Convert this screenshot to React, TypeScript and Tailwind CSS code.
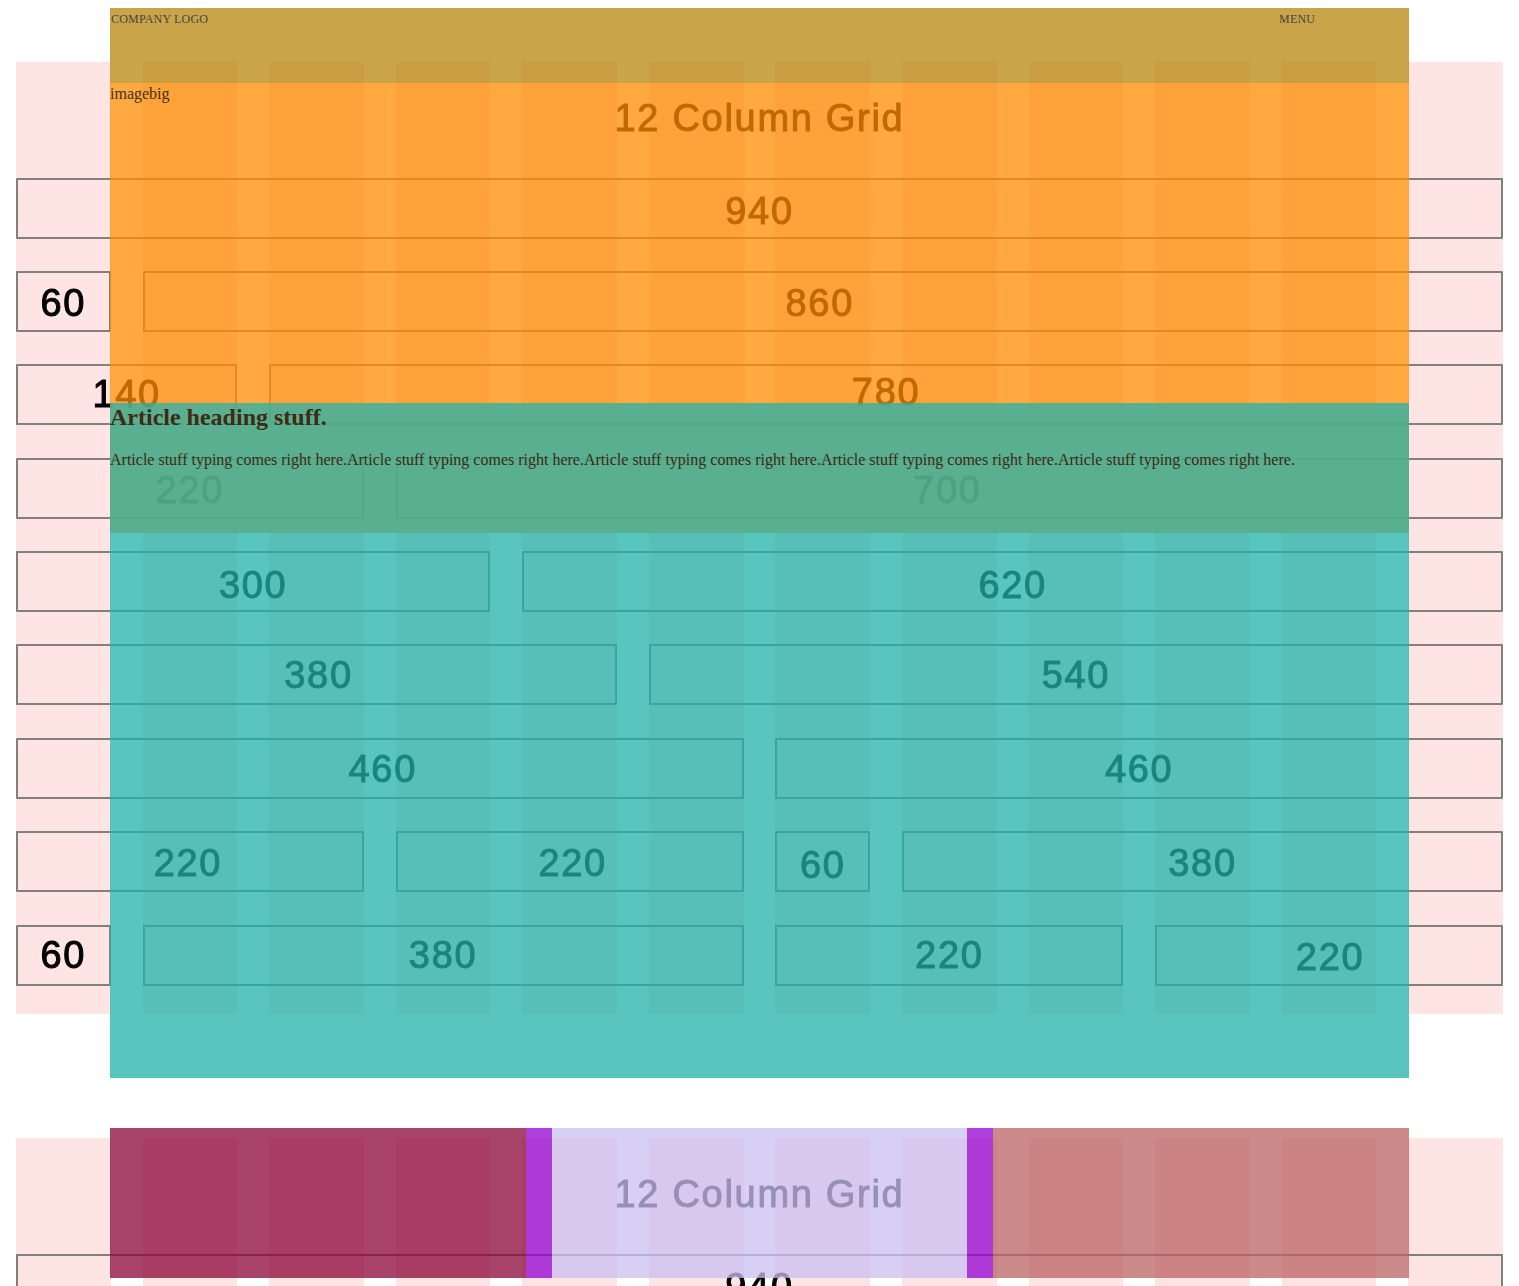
const rows: { span: string; label: string; shift: string }[][] = [
  [{ span: "col-span-12", label: "940", shift: "translate-y-[3px]" }],
  [
    { span: "col-span-1", label: "60", shift: "translate-y-[2px]" },
    { span: "col-span-11", label: "860", shift: "-translate-x-[3px] translate-y-[2px]" },
  ],
  [
    { span: "col-span-2", label: "140", shift: "-translate-y-[1px]" },
    { span: "col-span-10", label: "780", shift: "-translate-y-[3px]" },
  ],
  [
    { span: "col-span-3", label: "220", shift: "translate-y-[2px]" },
    { span: "col-span-9", label: "700", shift: "-translate-x-[2px] translate-y-[2px]" },
  ],
  [
    { span: "col-span-4", label: "300", shift: "translate-y-[3px]" },
    { span: "col-span-8", label: "620", shift: "translate-y-[3px]" },
  ],
  [
    { span: "col-span-5", label: "380", shift: "translate-x-[2px]" },
    { span: "col-span-7", label: "540", shift: "" },
  ],
  [
    { span: "col-span-6", label: "460", shift: "translate-x-[3px] translate-y-[1px]" },
    { span: "col-span-6", label: "460", shift: "translate-y-[1px]" },
  ],
  [
    { span: "col-span-3", label: "220", shift: "-translate-x-[2px] translate-y-[1px]" },
    { span: "col-span-3", label: "220", shift: "translate-x-[3px] translate-y-[1px]" },
    { span: "col-span-1", label: "60", shift: "translate-y-[3px]" },
    { span: "col-span-5", label: "380", shift: "translate-y-[1px]" },
  ],
  [
    { span: "col-span-1", label: "60", shift: "" },
    { span: "col-span-5", label: "380", shift: "" },
    { span: "col-span-3", label: "220", shift: "" },
    { span: "col-span-3", label: "220", shift: "translate-x-[1px] translate-y-[2px]" },
  ],
];

const columns = Array.from({ length: 12 }, (_, i) => i);

function GridSheet({ rowCount }: { rowCount: number }) {
  return (
    <div className="relative h-[1076px] pl-4 pr-4 blur-[0.7px]">
      <div className="absolute left-4 right-4 top-0 grid h-[952px] grid-cols-12 gap-x-[31.85px]">
        {columns.map((c) => (
          <div key={c} className="bg-[#ffe4e4]" />
        ))}
      </div>
      <div className="relative flex flex-col pt-[26px] font-['Liberation_Sans',Arial,sans-serif] text-[38px] leading-none tracking-[1.7px] text-black [-webkit-text-stroke:1px_currentColor]">
        <div className="flex h-[60px] items-center justify-center">12 Column Grid</div>
        <div className="mt-[29.5px] flex flex-col gap-y-[32.375px]">
          {rows.slice(0, rowCount).map((row, r) => (
            <div key={r} className="grid grid-cols-12 gap-x-[31.85px]">
              {row.map((cell, i) => (
                <div
                  key={i}
                  className={`${cell.span} flex h-[61px] items-center justify-center rounded-[1px] border-2 border-[#808080]`}
                >
                  <span className={cell.shift}>{cell.label}</span>
                </div>
              ))}
            </div>
          ))}
        </div>
      </div>
    </div>
  );
}

export default function App() {
  return (
    <div className="relative h-[1286px] w-full overflow-hidden bg-white font-['Liberation_Serif','Times_New_Roman',serif] text-base">
      <div className="absolute inset-x-0 top-[62px]">
        <GridSheet rowCount={9} />
        <GridSheet rowCount={1} />
      </div>

      <div className="relative ml-[110px] w-[1299px] pt-2">
        <header className="flex h-[75px] items-start bg-[rgb(184_134_11/0.75)] pt-1 text-xs leading-[14px] tracking-[0.2px] text-[#444444]">
          <div className="w-[90%] pl-px">COMPANY LOGO</div>
          <div>MENU</div>
        </header>

        <section className="h-[320px] bg-[rgb(255_140_0/0.75)] leading-[21px] text-[#44301c]">imagebig</section>

        <article className="h-[130px] bg-[rgb(80_172_138/0.95)] pt-px text-[#3f2a14]">
          <h2 className="mb-5 text-2xl font-bold leading-[27px]">Article heading stuff.</h2>
          <p className="leading-[18px]">
            Article stuff typing comes right here.Article stuff typing comes right here.Article stuff typing comes right here.Article stuff typing comes right here.Article stuff typing comes right here.
          </p>
        </article>

        <section className="h-[545px] bg-[rgb(32_178_170/0.75)]" />

        <section className="mt-[50px] flex h-[150px]">
          <div className="w-[32%] bg-[rgb(139_4_56/0.75)]" />
          <div className="w-[2%] bg-[rgb(148_0_211/0.75)]" />
          <div className="w-[32%] bg-[rgb(203_191_241/0.75)]" />
          <div className="w-[2%] bg-[rgb(148_0_211/0.75)]" />
          <div className="w-[32%] bg-[rgb(187_99_99/0.75)]" />
        </section>
      </div>
    </div>
  );
}
